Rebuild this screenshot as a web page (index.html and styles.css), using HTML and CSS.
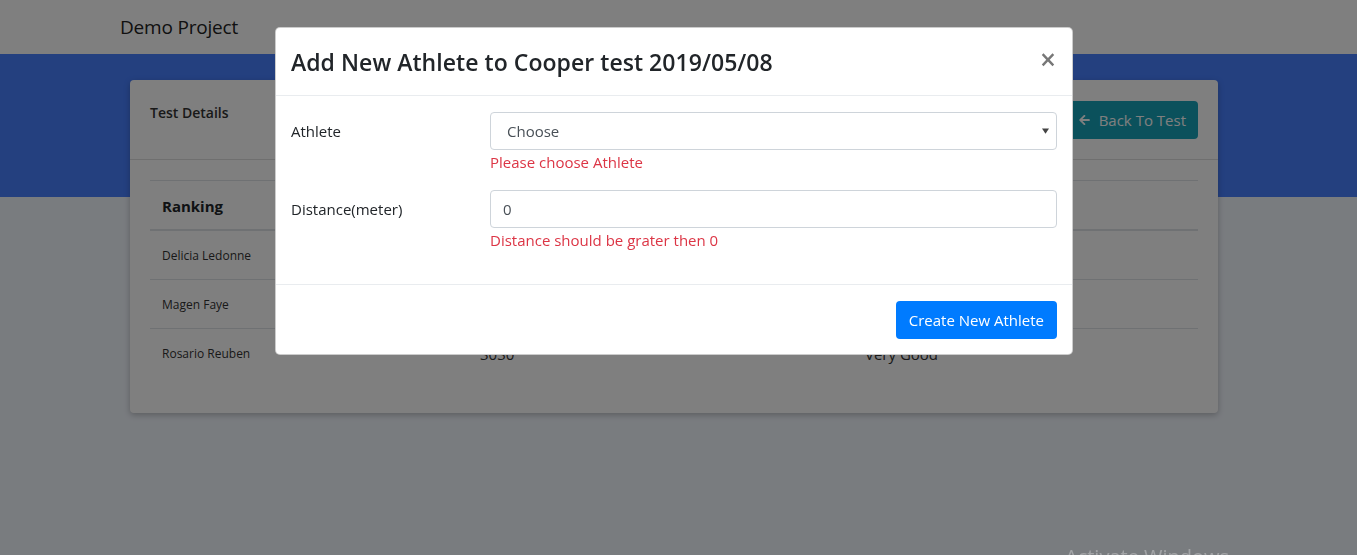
FILE: index.html
```html
<!DOCTYPE html>
<html>
<head>
<meta charset="utf-8">
<link rel="stylesheet" href="styles.css">
</head>
<body>
<nav class="navbar"><span class="brand">Demo Project</span></nav>
<main class="page">
  <section class="card">
    <header class="card-header">
      <span class="card-title">Test Details</span>
      <button class="btn-teal"><svg class="arrow" viewBox="0 0 448 512" width="11" height="12"><path fill="currentColor" d="M257.5 445.1l-22.2 22.2c-9.4 9.4-24.6 9.4-33.900 0L7 273c-9.4-9.4-9.4-24.6 0-33.9L201.4 44.7c9.4-9.4 24.6-9.4 33.9 0l22.2 22.2c9.5 9.5 9.3 25-.4 34.3L136.6 216H424c13.3 0 24 10.7 24 24v32c0 13.3-10.7 24-24 24H136.6l120.5 114.8c9.8 9.3 10 24.8.4 34.3z"/></svg>Back To Test</button>
    </header>
    <div class="card-body">
      <table class="table">
        <thead>
          <tr><th class="c1">Ranking</th><th class="c2">Distance</th><th class="c3">Fitness Rating</th></tr>
        </thead>
        <tbody>
          <tr><td>Delicia Ledonne</td><td>4000</td><td>Excellent</td></tr>
          <tr><td>Magen Faye</td><td>3500</td><td>Very Good</td></tr>
          <tr><td>Rosario Reuben</td><td>3030</td><td>Very Good</td></tr>
        </tbody>
      </table>
    </div>
  </section>
</main>

<div class="backdrop"></div>
<div class="watermark">Activate Windows</div>

<div class="modal">
  <div class="modal-header">
    <h4 class="modal-title">Add New Athlete to Cooper test 2019/05/08</h4>
    <span class="close">&times;</span>
  </div>
  <div class="modal-body">
    <div class="form-row">
      <label class="form-label">Athlete</label>
      <div class="form-col">
        <div class="select"><span>Choose</span><svg class="caret" viewBox="0 0 8 6" width="7" height="6"><path d="M0 0h8L4 6z" fill="#444"/></svg></div>
        <div class="invalid">Please choose Athlete</div>
      </div>
    </div>
    <div class="form-row">
      <label class="form-label">Distance(meter)</label>
      <div class="form-col">
        <div class="input">0</div>
        <div class="invalid">Distance should be grater then 0</div>
      </div>
    </div>
  </div>
  <div class="modal-footer">
    <button class="btn-primary">Create New Athlete</button>
  </div>
</div>
</body>
</html>
```

FILE: styles.css
```css
* { box-sizing: border-box; }
html, body { margin: 0; padding: 0; }
body {
  font-family: "Open Sans", "Noto Sans", sans-serif;
  color: #212529;
  background: #f3f8ff;
  width: 1357px;
  height: 555px;
  overflow: hidden;
}
.navbar {
  height: 54px;
  background: #ffffff;
  display: flex;
  align-items: center;
  padding-left: 120px;
}
.brand {
  font-size: 19px;
  color: #222;
  letter-spacing: -0.2px;
}
.page {
  background: linear-gradient(#4880ff 0 143px, #f3f8ff 143px);
  padding: 26px 0 0 130px;
  height: 501px;
}
.card {
  width: 1088px;
  background: #fff;
  border-radius: 4px;
  box-shadow: 0 2px 6px rgba(0,0,0,.25);
}
.card-header {
  display: flex;
  justify-content: space-between;
  align-items: flex-start;
  padding: 21px 20px 20px 20px;
  border-bottom: 1px solid rgba(0,0,0,.125);
}
.card-title {
  font-size: 14px;
  font-weight: 600;
  line-height: 24px;
  color: #333;
}
.btn-teal {
  background: #17a2b8;
  color: #fff;
  border: 0;
  border-radius: 4px;
  height: 38px;
  padding: 0 12px;
  font-family: inherit;
  font-size: 15px;
  display: flex;
  align-items: center;
  gap: 9px;
}
.card-body { padding: 20px 20px 36px 20px; }
.table {
  width: 100%;
  border-collapse: collapse;
  font-size: 12px;
}
.table th, .table td {
  padding: 13px 12px 11px;
  line-height: 24px;
  text-align: left;
  border-top: 1px solid #dee2e6;
}
.table th {
  font-size: 15px;
  font-weight: 700;
  border-bottom: 2px solid #dee2e6;
  color: #212529;
}
.table td { color: #333; }
.c1 { width: 318px; }
.c2 { width: 385px; }
.table tbody tr td:nth-child(2), .table tbody tr td:nth-child(3) { font-size: 15px; }

.backdrop {
  position: fixed;
  inset: 0;
  background: rgba(0,0,0,.5);
}
.watermark {
  position: fixed;
  left: 1065px;
  top: 543px;
  font-size: 20px;
  color: rgba(255,255,255,.3);
}
.modal {
  position: fixed;
  top: 27px;
  left: 275px;
  width: 798px;
  background: #fff;
  border: 1px solid rgba(0,0,0,.2);
  border-radius: 5px;
}
.modal-header {
  display: flex;
  justify-content: space-between;
  align-items: flex-start;
  padding: 16px 16px 15px 15px;
  border-bottom: 1px solid #e9ecef;
}
.modal-title {
  margin: 0;
  font-size: 23px;
  font-weight: 600;
  line-height: 36px;
  letter-spacing: 0.05px;
}
.close {
  font-size: 28px;
  font-weight: 600;
  line-height: 30px;
  color: #777;
  margin-right: 0;
}
.modal-body { padding: 16px 15px; }
.form-row {
  display: flex;
  margin-bottom: 16px;
}
.form-label {
  width: 199px;
  padding-top: 7px;
  font-size: 15px;
  line-height: 24px;
}
.form-col { flex: 1; }
.select, .input {
  height: 38px;
  border: 1px solid #ced4da;
  border-radius: 4px;
  display: flex;
  align-items: center;
  font-size: 15px;
  color: #495057;
}
.select {
  justify-content: space-between;
  padding: 0 7px 0 16px;
}
.input { padding: 0 12px; }
.invalid {
  color: #dc3545;
  font-size: 15px;
  line-height: 24px;
}
.modal-footer {
  display: flex;
  justify-content: flex-end;
  padding: 16px 15px 15px;
  border-top: 1px solid #e9ecef;
}
.btn-primary {
  background: #007bff;
  color: #fff;
  border: 0;
  border-radius: 4px;
  height: 38px;
  padding: 0 13px;
  font-family: inherit;
  font-size: 15px;
}
```
